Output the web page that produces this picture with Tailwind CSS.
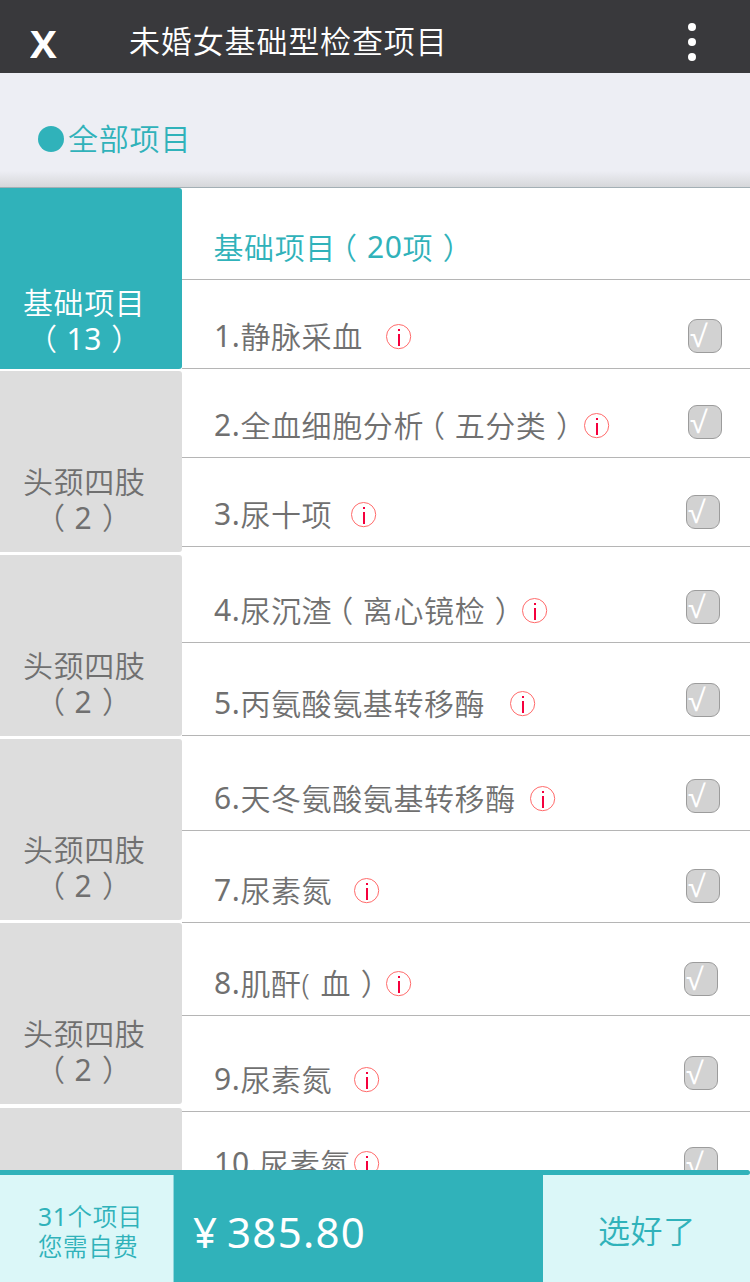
<!DOCTYPE html>
<html lang="zh-CN">
<head>
<meta charset="utf-8">
<title>未婚女基础型检查项目</title>
<script src="https://cdn.jsdelivr.net/npm/@tailwindcss/browser@4"></script>
</head>
<body class="w-[750px] h-[1282px] overflow-hidden bg-white flex flex-col font-['Noto_Sans','Noto_Sans_CJK_SC',sans-serif] text-[30px] font-[350] tracking-[0.6px] text-[#707070] whitespace-nowrap">
<svg class="hidden">
  <symbol id="info" viewBox="0 0 26 26"><circle cx="12.6" cy="12.6" r="12.1" fill="none" stroke="#ff6b6b" stroke-width="1"/><path d="M12 5h2v2h-2zM12 10h2v12h-2z" fill="#f5003d"/></symbol>
</svg>
<header class="h-[73px] shrink-0 bg-[#39393c] text-white flex">
  <div class="ml-[30px] mt-[22px] w-[99px] leading-[44px] text-[37px] font-bold font-['Open_Sans']"><span class="inline-block origin-left scale-x-108">X</span></div>
  <h1 class="mt-[21px] text-[31px] leading-[40px] tracking-[0.85px]">未婚女基础型检查项目</h1>
  <div class="ml-auto mr-[54px] mt-[23px] flex flex-col gap-[7px]"><i class="size-2 rounded-full bg-white"></i><i class="size-2 rounded-full bg-white"></i><i class="size-2 rounded-full bg-white"></i></div>
</header>
<section class="h-[115px] shrink-0 bg-[#edeef4] border-b border-[#a3afb5] flex flex-col justify-between text-[#30b2ba]">
  <div class="ml-[38px] mt-[46px] flex items-center h-[40px]"><i class="size-[26px] rounded-full bg-[#30b2ba] mr-[4px]"></i><span class="leading-[40px] tracking-[0.8px]">全部项目</span></div>
  <div class="h-4 bg-linear-to-b from-[#edeef4] to-[#d6d7da]"></div>
</section>
<main class="h-[982px] shrink-0 overflow-hidden flex">
  <aside class="w-[182px] shrink-0 flex flex-col leading-[36px]">
    <div class="h-[181px] mb-[2px] shrink-0 rounded-r-[3px] bg-[#30b2ba] text-white pl-[23px] pt-[97px]">基础项目<div class="ml-[13px]"><span class="[font-feature-settings:'halt'] pl-[6px] pr-[9px]">（</span><span class="font-normal">13</span><span class="[font-feature-settings:'halt'] pl-[9px]">）</span></div></div>
    <div class="h-[181px] mb-[3px] shrink-0 rounded-r-[3px] bg-[#ddd] pl-[23px] pt-[93px]">头颈四肢<div class="ml-[21px]"><span class="[font-feature-settings:'halt'] pl-[6px] pr-[9px]">（</span><span class="font-normal">2</span><span class="[font-feature-settings:'halt'] pl-[9.5px]">）</span></div></div>
    <div class="h-[181px] mb-[3px] shrink-0 rounded-r-[3px] bg-[#ddd] pl-[23px] pt-[93px]">头颈四肢<div class="ml-[21px]"><span class="[font-feature-settings:'halt'] pl-[6px] pr-[9px]">（</span><span class="font-normal">2</span><span class="[font-feature-settings:'halt'] pl-[9.5px]">）</span></div></div>
    <div class="h-[181px] mb-[3px] shrink-0 rounded-r-[3px] bg-[#ddd] pl-[23px] pt-[93px]">头颈四肢<div class="ml-[21px]"><span class="[font-feature-settings:'halt'] pl-[6px] pr-[9px]">（</span><span class="font-normal">2</span><span class="[font-feature-settings:'halt'] pl-[9.5px]">）</span></div></div>
    <div class="h-[181px] mb-[4px] shrink-0 rounded-r-[3px] bg-[#ddd] pl-[23px] pt-[93px]">头颈四肢<div class="ml-[21px]"><span class="[font-feature-settings:'halt'] pl-[6px] pr-[9px]">（</span><span class="font-normal">2</span><span class="[font-feature-settings:'halt'] pl-[9.5px]">）</span></div></div>
    <div class="h-[181px] shrink-0 rounded-r-[3px] bg-[#ddd]"></div>
  </aside>
  <div class="flex-1 leading-[26px]">
    <div class="h-[92px] border-b border-[#b5b5b5] pl-[31.5px] pt-[47px] text-[#30b2ba]">基础项目<span class="[font-feature-settings:'halt'] pl-[6px] pr-[9.5px]">（</span><span class="inline-block -translate-y-px font-normal">20</span>项<span class="[font-feature-settings:'halt'] pl-[9.5px]">）</span></div>
    <div class="h-[89px] border-b border-[#b5b5b5] pl-[32px] flex items-start"><div class="w-[172px] mt-[44px]"><span class="inline-block -translate-y-px font-normal">1.</span>静脉采血</div><svg class="size-[26px] shrink-0 mt-[44px]"><use href="#info"/></svg><div class="ml-auto mr-[28px] mt-[39px] size-[34px] rounded-[9px] border border-[#9c9c9c] bg-[#d2d2d2] text-white font-['Open_Sans'] font-normal pl-px leading-[32px]">√</div></div>
    <div class="h-[89px] border-b border-[#b5b5b5] pl-[32px] flex items-start"><div class="w-[370px] mt-[44px]"><span class="inline-block -translate-y-px font-normal">2.</span>全血细胞分析<span class="[font-feature-settings:'halt'] pl-[6px] pr-[9px]">（</span>五分类<span class="[font-feature-settings:'halt'] pl-[9.5px]">）</span></div><svg class="size-[26px] shrink-0 mt-[44px]"><use href="#info"/></svg><div class="ml-auto mr-[28px] mt-[36px] size-[34px] rounded-[9px] border border-[#9c9c9c] bg-[#d2d2d2] text-white font-['Open_Sans'] font-normal pl-px leading-[32px]">√</div></div>
    <div class="h-[89px] border-b border-[#b5b5b5] pl-[32px] flex items-start"><div class="w-[137px] mt-[44px]"><span class="inline-block -translate-y-px font-normal">3.</span>尿十项</div><svg class="size-[26px] shrink-0 mt-[44px]"><use href="#info"/></svg><div class="ml-auto mr-[30px] mt-[37px] size-[34px] rounded-[9px] border border-[#9c9c9c] bg-[#d2d2d2] text-white font-['Open_Sans'] font-normal pl-px leading-[32px]">√</div></div>
    <div class="h-[96px] border-b border-[#b5b5b5] pl-[32px] flex items-start"><div class="w-[308px] mt-[51px]"><span class="inline-block -translate-y-px font-normal">4.</span>尿沉渣<span class="[font-feature-settings:'halt'] pl-[6px] pr-[9px]">（</span>离心镜检<span class="[font-feature-settings:'halt'] pl-[9.5px]">）</span></div><svg class="size-[26px] shrink-0 mt-[51px]"><use href="#info"/></svg><div class="ml-auto mr-[30px] mt-[43px] size-[34px] rounded-[9px] border border-[#9c9c9c] bg-[#d2d2d2] text-white font-['Open_Sans'] font-normal pl-px leading-[32px]">√</div></div>
    <div class="h-[93px] border-b border-[#b5b5b5] pl-[32px] flex items-start"><div class="w-[296px] mt-[48px]"><span class="inline-block -translate-y-px font-normal">5.</span>丙氨酸氨基转移酶</div><svg class="size-[26px] shrink-0 mt-[48px]"><use href="#info"/></svg><div class="ml-auto mr-[30px] mt-[40px] size-[34px] rounded-[9px] border border-[#9c9c9c] bg-[#d2d2d2] text-white font-['Open_Sans'] font-normal pl-px leading-[32px]">√</div></div>
    <div class="h-[95px] border-b border-[#b5b5b5] pl-[32px] flex items-start"><div class="w-[316px] mt-[50px]"><span class="inline-block -translate-y-px font-normal">6.</span>天冬氨酸氨基转移酶</div><svg class="size-[26px] shrink-0 mt-[50px]"><use href="#info"/></svg><div class="ml-auto mr-[30px] mt-[43px] size-[34px] rounded-[9px] border border-[#9c9c9c] bg-[#d2d2d2] text-white font-['Open_Sans'] font-normal pl-px leading-[32px]">√</div></div>
    <div class="h-[92px] border-b border-[#b5b5b5] pl-[32px] flex items-start"><div class="w-[140px] mt-[47px]"><span class="inline-block -translate-y-px font-normal">7.</span>尿素氮</div><svg class="size-[26px] shrink-0 mt-[47px]"><use href="#info"/></svg><div class="ml-auto mr-[30px] mt-[38px] size-[34px] rounded-[9px] border border-[#9c9c9c] bg-[#d2d2d2] text-white font-['Open_Sans'] font-normal pl-px leading-[32px]">√</div></div>
    <div class="h-[93px] border-b border-[#b5b5b5] pl-[32px] flex items-start"><div class="w-[172px] mt-[48px]"><span class="inline-block -translate-y-px font-normal">8.</span>肌酐(<span class="ml-[10px]">血</span><span class="[font-feature-settings:'halt'] pl-[9.5px]">）</span></div><svg class="size-[26px] shrink-0 mt-[48px]"><use href="#info"/></svg><div class="ml-auto mr-[32px] mt-[39px] size-[34px] rounded-[9px] border border-[#9c9c9c] bg-[#d2d2d2] text-white font-['Open_Sans'] font-normal pl-px leading-[32px]">√</div></div>
    <div class="h-[96px] border-b border-[#b5b5b5] pl-[32px] flex items-start"><div class="w-[140px] mt-[51px]"><span class="inline-block -translate-y-px font-normal">9.</span>尿素氮</div><svg class="size-[26px] shrink-0 mt-[51px]"><use href="#info"/></svg><div class="ml-auto mr-[32px] mt-[40px] size-[34px] rounded-[9px] border border-[#9c9c9c] bg-[#d2d2d2] text-white font-['Open_Sans'] font-normal pl-px leading-[32px]">√</div></div>
    <div class="h-[96px] pl-[32px] flex items-start"><div class="w-[140px] mt-[39px]"><span class="inline-block -translate-y-px font-normal tracking-[0.9px]">10.</span>尿素氮</div><svg class="size-[26px] shrink-0 mt-[39px]"><use href="#info"/></svg><div class="ml-auto mr-[32px] mt-[35px] size-[34px] rounded-[9px] border border-[#9c9c9c] bg-[#d2d2d2] text-white font-['Open_Sans'] font-normal pl-px leading-[32px]">√</div></div>
  </div>
</main>
<footer class="h-[112px] shrink-0 text-[#30b2ba]">
  <div class="h-[5px] rounded-r-full bg-[#30b2ba]"></div>
  <div class="h-[107px] flex">
    <div class="w-[174px] bg-[#dbf7f8] border-r border-[#8fd8dc] pl-[38px] pt-[27px] text-[24.5px] leading-[30px]"><div class="tracking-[0.7px]"><span class="font-normal">31</span>个项目</div><div>您需自费</div></div>
    <div class="w-[369px] bg-[#30b2ba] text-white pl-[19px] pt-[30px] text-[42px] leading-[54px] tracking-[1.3px] font-normal flex"><span class="w-[34px]">¥</span><span>385.80</span></div>
    <button class="flex-1 bg-[#dbf7f8] pl-[55px] pt-[5px] text-left text-[32px]">选好了</button>
  </div>
</footer>
</body>
</html>
